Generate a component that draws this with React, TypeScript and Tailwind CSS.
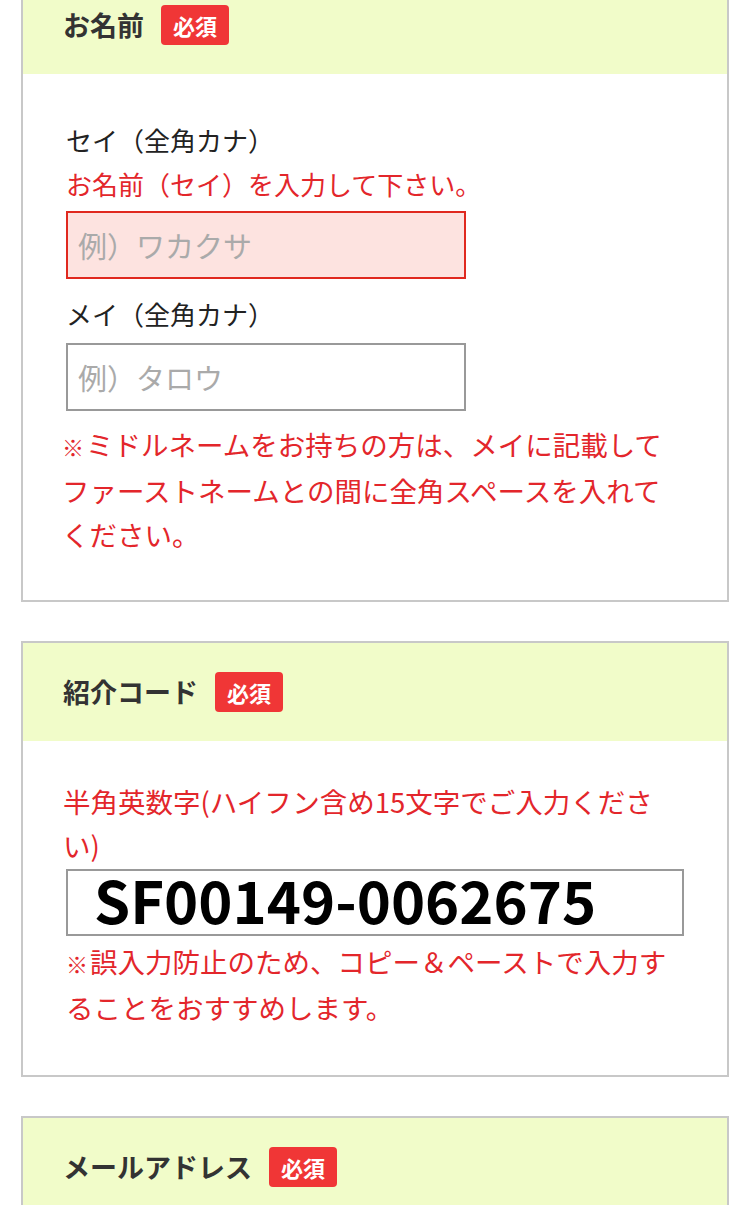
const font = "font-['Noto_Sans_CJK_JP','Noto_Sans',sans-serif] [text-spacing-trim:space-all]";

function Badge() {
  return (
    <span className="inline-flex h-[40px] w-[68px] items-center justify-center rounded-[4px] bg-[#f03636] text-[22px] font-bold text-white">
      必須
    </span>
  );
}

function CardHeader({ title }: { title: string }) {
  return (
    <div className="flex h-[98px] items-center gap-[17px] bg-[#f1fcc9] pl-[40px]">
      <h2 className="text-[27px] font-bold text-[#333]">{title}</h2>
      <Badge />
    </div>
  );
}

function Note({ children }: { children: React.ReactNode }) {
  return (
    <p className="text-[27.5px] leading-[44px] text-[#e3262b]">
      <span className="mr-[2px] text-[22px] font-bold">※</span>
      {children}
    </p>
  );
}

export default function App() {
  return (
    <div className={`${font} min-h-screen overflow-hidden bg-white px-[21px]`}>
      {/* お名前 */}
      <section className="mt-[-26px] border-2 border-[#c8c8c8]">
        <CardHeader title="お名前" />
        <div className="px-[43px] pt-[44px] pb-[44px]">
          <label className="block text-[26px] leading-[44px] text-[#222]">セイ（全角カナ）</label>
          <p className="text-[26px] leading-[44px] text-[#e3262b]">お名前（セイ）を入力して下さい。</p>
          <input
            className="mt-[5px] block h-[68px] w-[400px] border-2 border-[#e0291f] bg-[#fde3e0] px-[10px] text-[29px] outline-none placeholder:text-[#aaa]"
            placeholder="例）ワカクサ"
          />
          <label className="mt-[13px] block text-[26px] leading-[44px] text-[#222]">メイ（全角カナ）</label>
          <input
            className="mt-[7px] block h-[68px] w-[400px] border-2 border-[#999] bg-white px-[10px] text-[29px] outline-none placeholder:text-[#aaa]"
            placeholder="例）タロウ"
          />
          <div className="mt-[11px] -ml-[4px]">
            <Note>
              ミドルネームをお持ちの方は、メイに記載して
              <br />
              ファーストネームとの間に全角スペースを入れて
              <br />
              ください。
            </Note>
          </div>
        </div>
      </section>

      {/* 紹介コード */}
      <section className="mt-[39px] border-2 border-[#c8c8c8]">
        <CardHeader title="紹介コード" />
        <div className="px-[40px] pt-[38px] pb-[46px]">
          <p className="text-[27.5px] leading-[44px] text-[#e3262b]">
            半角英数字(ハイフン含め15文字でご入力くださ
            <br />い)
          </p>
          <input
            className="mt-[2px] ml-[3px] block h-[67px] w-[618px] border-2 border-[#999] bg-white pl-[26px] pb-[6px] text-[58px] font-bold text-black outline-none"
            defaultValue="SF00149-0062675"
            readOnly
          />
          <div className="mt-[3px] pl-[3px]">
            <Note>
              誤入力防止のため、コピー＆ペーストで入力す
              <br />
              ることをおすすめします。
            </Note>
          </div>
        </div>
      </section>

      {/* メールアドレス */}
      <section className="mt-[39px] border-2 border-b-0 border-[#c8c8c8]">
        <CardHeader title="メールアドレス" />
      </section>
    </div>
  );
}
